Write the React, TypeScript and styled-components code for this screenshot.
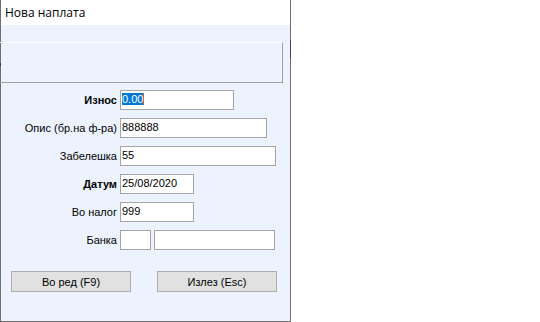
import styled, { createGlobalStyle } from "styled-components";

const Global = createGlobalStyle`
    html, body {
        margin: 0;
        padding: 0;
        background: #ffffff;
    }
    body {
        font-family: "Liberation Sans", Arial, sans-serif;
    }
`;

const Window = styled.div`
    width: 291px;
    height: 322px;
    box-sizing: border-box;
    border: 1px solid #6f6f6f;
    border-top: none;
    background: #ecf3fe;
    display: flex;
    flex-direction: column;
    position: relative;
`;

const TitleBar = styled.div`
    height: 25px;
    background: #ffffff;
    display: flex;
    align-items: center;
    padding-left: 4px;
    font-family: "Open Sans", "Noto Sans", sans-serif;
    font-size: 12px;
    color: #000;
`;

const TopPanel = styled.div`
    margin-top: 17px;
    margin-left: -1px;
    width: 283px;
    height: 41px;
    box-sizing: border-box;
    border-top: 1px solid #ffffff;
    border-right: 1px solid #a0a0a0;
    border-bottom: 1px solid #a0a0a0;
`;

const Form = styled.div`
    margin-top: 7px;
    display: grid;
    grid-template-columns: 116px 1fr;
    column-gap: 3px;
    row-gap: 8px;
    align-items: center;
`;

const Label = styled.div<{ $bold?: boolean }>`
    text-align: right;
    font-size: 11px;
    font-weight: ${(p) => (p.$bold ? "bold" : "normal")};
    color: #000;
    white-space: nowrap;
`;

const Fields = styled.div`
    display: flex;
    gap: 3px;
`;

const Field = styled.div<{ $w: number }>`
    width: ${(p) => p.$w}px;
    height: 20px;
    box-sizing: border-box;
    border: 1px solid #a5a5a5;
    background: #ffffff;
    font-size: 11px;
    color: #000;
    padding: 2px 1px;
    line-height: 13px;
    white-space: nowrap;
`;

const Selected = styled.span`
    background: #0078d7;
    color: #ffffff;
    border-right: 1px solid #e8590c;
`;

const Buttons = styled.div`
    margin-top: 21px;
    padding-left: 10px;
    display: flex;
    gap: 26px;
`;

const Button = styled.div`
    width: 120px;
    height: 21px;
    box-sizing: border-box;
    border: 1px solid #adadad;
    background: #e1e1e1;
    display: flex;
    align-items: center;
    justify-content: center;
    font-size: 11px;
    color: #000;
`;

const Mark = styled.div<{ $side: "left" | "right"; $top: number; $h: number }>`
    position: absolute;
    ${(p) => p.$side}: -1px;
    top: ${(p) => p.$top}px;
    width: 1px;
    height: ${(p) => p.$h}px;
    background: ${(p) => (p.$side === "right" ? "#4e3c44" : "#34345a")};
`;

export default function App() {
    return (
        <>
            <Global/>
            <Window>
                <TitleBar>Нова наплата</TitleBar>
                <TopPanel/>
                <Form>
                    <Label $bold>Износ</Label>
                    <Fields><Field $w={114}><Selected>0.00</Selected></Field></Fields>

                    <Label>Опис (бр.на ф-ра)</Label>
                    <Fields><Field $w={147}>888888</Field></Fields>

                    <Label>Забелешка</Label>
                    <Fields><Field $w={156}>55</Field></Fields>

                    <Label $bold>Датум</Label>
                    <Fields><Field $w={74}>25/08/2020</Field></Fields>

                    <Label>Во налог</Label>
                    <Fields><Field $w={74}>999</Field></Fields>

                    <Label>Банка</Label>
                    <Fields>
                        <Field $w={31}/>
                        <Field $w={121}/>
                    </Fields>
                </Form>
                <Buttons>
                    <Button>Во ред (F9)</Button>
                    <Button>Излез (Esc)</Button>
                </Buttons>
                <Mark $side="right" $top={40} $h={18}/>
                <Mark $side="left" $top={63} $h={3}/>
            </Window>
        </>
    );
}
